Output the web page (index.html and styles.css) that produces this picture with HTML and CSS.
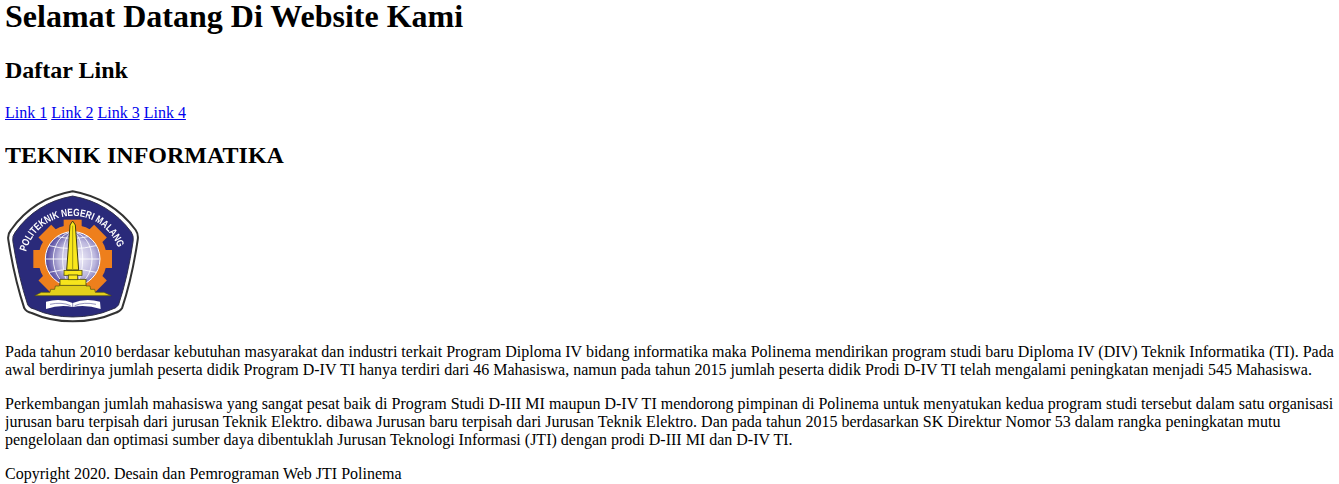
FILE: index.html
```html
<!DOCTYPE html>
<html>
<head>
<meta charset="utf-8">
<title>Teknik Informatika</title>
<link rel="stylesheet" href="styles.css">
</head>
<body>
<h1>Selamat Datang Di Website Kami</h1>
<h2>Daftar Link</h2>
<p><a href="#">Link 1</a> <a href="#">Link 2</a> <a href="#">Link 3</a> <a href="#">Link 4</a></p>
<h2>TEKNIK INFORMATIKA</h2>
<svg class="logo" width="135" height="135" viewBox="15 12 405 405" role="img" aria-label="Logo Politeknik Negeri Malang">
  <defs>
    <path id="shield" d="M218 19 Q100 40 33 135 Q22 148 25 165 Q43 280 73 370 Q79 381 95 384 Q150 409 218 409 Q288 409 345 384 Q359 381 366 370 Q396 280 413 165 Q416 148 407 135 Q336 40 218 19 Z"/>
    <path id="arc" d="M78 200 A145 145 0 0 1 358 200"/>
    <radialGradient id="globe" cx="0.58" cy="0.5" r="0.55">
      <stop offset="0" stop-color="#f4f2fb"/>
      <stop offset="0.6" stop-color="#bdb8de"/>
      <stop offset="1" stop-color="#5a50a2"/>
    </radialGradient>
    <filter id="soft" x="-5%" y="-5%" width="110%" height="110%"><feGaussianBlur stdDeviation="1.2"/></filter>
  </defs>
  <g filter="url(#soft)">
    <use href="#shield" fill="#fff" stroke="#333" stroke-width="6"/>
    <use href="#shield" transform="translate(218 222) scale(.93) translate(-218 -222)" fill="#2b2a7a" stroke="#2a2a44" stroke-width="3"/>
    <g fill="#ee7f1f">
      <circle cx="218" cy="222" r="103"/>
      <rect x="191" y="104" width="54" height="40"/>
      <rect x="191" y="104" width="54" height="40" transform="rotate(45 218 222)"/>
      <rect x="191" y="104" width="54" height="40" transform="rotate(90 218 222)"/>
      <rect x="191" y="104" width="54" height="40" transform="rotate(135 218 222)"/>
      <rect x="191" y="104" width="54" height="40" transform="rotate(225 218 222)"/>
      <rect x="191" y="104" width="54" height="40" transform="rotate(270 218 222)"/>
      <rect x="191" y="104" width="54" height="40" transform="rotate(315 218 222)"/>
    </g>
    <circle cx="218" cy="222" r="82" fill="url(#globe)" stroke="#fff" stroke-width="3"/>
    <g fill="none" stroke="#fff" stroke-width="2.5">
      <ellipse cx="218" cy="222" rx="30" ry="80"/>
      <ellipse cx="218" cy="222" rx="58" ry="80"/>
      <path d="M138 222 H298 M148 182 Q218 200 288 182 M148 262 Q218 244 288 262 M172 155 Q218 165 264 155"/>
    </g>
    <path d="M104 332 L124 322 L150 322 L152 313 L164 313 L166 303 L178 303 L180 293 L256 293 L258 303 L270 303 L272 313 L284 313 L286 322 L312 322 L334 332 Z" fill="#e3cf1e" stroke="#4e4c12" stroke-width="2"/>
    <rect x="180" y="283" width="78" height="18" fill="#f7e41c" stroke="#4e4c12" stroke-width="2.5"/>
    <rect x="192" y="256" width="54" height="15" fill="#f9e71a" stroke="#4e4c12" stroke-width="2.5"/>
    <rect x="205" y="270" width="28" height="14" fill="#f9e71a" stroke="#4e4c12" stroke-width="2.5"/>
    <path d="M218 108 L226 120 L236 255 L200 255 L210 120 Z" fill="#f9e71a" stroke="#3e3c10" stroke-width="3"/>
    <path d="M218 122 V255" stroke="#a09a18" stroke-width="3"/>
    <path d="M138 350 Q182 338 218 354 Q256 338 300 350 L302 372 Q258 358 218 366 Q180 358 138 372 Z" fill="#fff"/>
    <path d="M218 354 V366 M150 358 Q185 350 212 362 M288 358 Q252 350 224 362" stroke="#2b2a7a" stroke-width="1.5" fill="none"/>
    <text class="logo-text" textLength="366" lengthAdjust="spacingAndGlyphs"><textPath href="#arc">POLITEKNIK NEGERI MALANG</textPath></text>
  </g>
</svg>
<p>Pada tahun 2010 berdasar kebutuhan masyarakat dan industri terkait Program Diploma IV bidang informatika maka Polinema mendirikan program studi baru Diploma IV (DIV) Teknik Informatika (TI). Pada awal berdirinya jumlah peserta didik Program D-IV TI hanya terdiri dari 46 Mahasiswa, namun pada tahun 2015 jumlah peserta didik Prodi D-IV TI telah mengalami peningkatan menjadi 545 Mahasiswa.</p>
<p>Perkembangan jumlah mahasiswa yang sangat pesat baik di Program Studi D-III MI maupun D-IV TI mendorong pimpinan di Polinema untuk menyatukan kedua program studi tersebut dalam satu organisasi jurusan baru terpisah dari jurusan Teknik Elektro. dibawa Jurusan baru terpisah dari Jurusan Teknik Elektro. Dan pada tahun 2015 berdasarkan SK Direktur Nomor 53 dalam rangka peningkatan mutu pengelolaan dan optimasi sumber daya dibentuklah Jurusan Teknologi Informasi (JTI) dengan prodi D-III MI dan D-IV TI.</p>
<p>Copyright 2020. Desain dan Pemrograman Web JTI Polinema</p>
</body>
</html>
```
FILE: styles.css
```css
body {
  margin: 0 5px;
  font-family: "Liberation Serif", serif;
  font-size: 16px;
  color: #000;
  background: #fff;
}
h1 {
  margin: 0 0 24px;
  line-height: 33px;
}
p {
  line-height: 18px;
}
.logo {
  display: block;
  margin-bottom: 19px;
}
.logo-text {
  font-family: "Liberation Sans", sans-serif;
  font-size: 31px;
  font-weight: 700;
  fill: #fff;
}
```
